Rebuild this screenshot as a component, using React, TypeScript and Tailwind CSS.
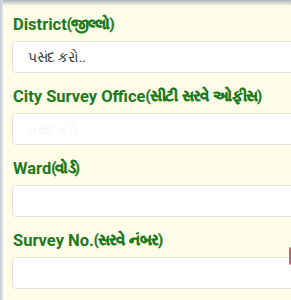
import React from "react";

function Label({ en, gu }: { en: string; gu: string }) {
  return (
    <div className="pl-[13px] h-[18px] flex items-center whitespace-nowrap font-bold text-[#1d7a1f] [font-family:Roboto,sans-serif]">
      <span className="text-[16.5px] leading-[18px]">{en}</span>
      <span className="text-[14.5px] leading-[18px] tracking-[-0.8px] [word-spacing:2px] [-webkit-text-stroke:0.3px_#1d7a1f]">{gu}</span>
    </div>
  );
}

function Field({ en, gu, value, placeholder }: { en: string; gu: string; value?: string; placeholder?: string }) {
  return (
    <div className="flex flex-col">
      <Label en={en} gu={gu} />
      <div className="ml-3 mt-[7px] h-[32px] w-[300px] rounded-[4px] border border-[#e2e2dc] bg-white flex items-center pl-[15px] text-[14px] tracking-[-0.3px] text-[#3a3a3a] [font-family:Roboto,sans-serif]">
        {value ? value : <span className="text-[#f7f7f7]">{placeholder}</span>}
      </div>
    </div>
  );
}

export default function App() {
  return (
    <div className="relative w-[291px] h-[300px] overflow-hidden bg-[#fdfde7]">
      <div className="absolute left-0 top-0 right-0 h-[6px] bg-gradient-to-b from-[#aeb6bf] to-transparent" />
      <div className="absolute left-0 top-0 bottom-0 w-[3px] bg-gradient-to-r from-[#c4c8d8] to-[#e6e8e4]" />
      <div className="absolute right-0 top-[247px] w-[2px] h-[18px] bg-[#d0607a] rounded-l" />
      <div className="flex flex-col gap-[15px] pt-[16px]">
        <Field en="District" gu="(જીલ્લો)" value="પસંદ કરો.." />
        <Field en="City Survey Office" gu="(સીટી સરવે ઓફીસ)" placeholder="પસંદ કરો" />
        <Field en="Ward" gu="(વોર્ડ)" />
        <Field en="Survey No." gu="(સરવે નંબર)" placeholder="--" />
      </div>
    </div>
  );
}
